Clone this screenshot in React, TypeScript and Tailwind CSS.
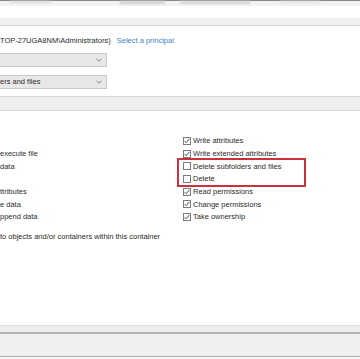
import React from "react";

const Check = ({ checked }: { checked: boolean }) => (
  <div className="w-[8px] h-[8px] border border-[#7c7c7c] bg-white flex items-center justify-center shrink-0">
    {checked && (
      <svg width="6" height="6" viewBox="0 0 6 6">
        <path d="M0.6 3.1 L2.2 4.7 L5.4 0.9" fill="none" stroke="#3a3a3a" strokeWidth="0.9" />
      </svg>
    )}
  </div>
);

const Row = ({ label, checked }: { label: string; checked: boolean }) => (
  <div className="h-[12.7px] flex items-center gap-[2px]">
    <Check checked={checked} />
    <span className="leading-none whitespace-nowrap">{label}</span>
  </div>
);

const LeftRow = ({ label }: { label: string }) => (
  <div className="h-[12.7px] flex items-center">
    <span className="leading-none whitespace-nowrap">{label}</span>
  </div>
);

const Chevron = () => (
  <svg width="6" height="4" viewBox="0 0 6 4">
    <path d="M0.5 0.7 L3 3.2 L5.5 0.7" fill="none" stroke="#666" strokeWidth="0.8" />
  </svg>
);

export default function App() {
  return (
    <div
      className="w-[360px] h-[359px] overflow-hidden bg-white flex flex-col text-[7.5px] text-[#2b2b2b]"
      style={{ fontFamily: '"Liberation Sans", Arial, sans-serif' }}
    >
      {/* top strip */}
      <div className="h-[1px] bg-[#8a8a8a] shrink-0" />
      <div className="h-[5px] bg-[#f3f3f3] shrink-0 flex items-start">
        <div className="w-[10px]" />
        <div className="w-[40px] h-[2px] bg-[#d8d8d8] blur-[1px]" />
        <div className="w-[70px]" />
        <div className="w-[45px] h-[3px] bg-[#cfcfcf] blur-[1px]" />
        <div className="w-[15px]" />
        <div className="w-[70px] h-[3px] bg-[#d4d4d4] blur-[1px]" />
        <div className="w-[30px]" />
        <div className="w-[40px] h-[2px] bg-[#e0e0e0] blur-[1px]" />
      </div>
      <div className="h-[12px] shrink-0" />
      <div className="h-[8px] bg-[#efefef] border-b border-[#d4d4d4] shrink-0" />

      {/* principal row */}
      <div className="mt-[10px] h-[10px] flex items-center shrink-0">
        <span className="whitespace-nowrap leading-none">TOP-27UGA8NM\Administrators)</span>
        <span className="ml-[6px] whitespace-nowrap leading-none text-[#3f82c4]">Select a principal</span>
      </div>

      {/* dropdowns */}
      <div className="mt-[7px] w-[107px] h-[14px] bg-[#e8e8e8] border border-l-0 border-[#cacaca] flex items-center justify-end pr-[4px] shrink-0">
        <Chevron />
      </div>
      <div className="mt-[8px] w-[107px] h-[14px] bg-[#e8e8e8] border border-l-0 border-[#cacaca] flex items-center justify-between pr-[4px] shrink-0">
        <span className="whitespace-nowrap leading-none">ers and files</span>
        <Chevron />
      </div>

      {/* gray band */}
      <div className="mt-[7px] h-[15px] bg-[#efefef] border-t border-b border-[#d8d8d8] shrink-0" />

      {/* permissions */}
      <div className="mt-[23.65px] flex shrink-0">
        <div className="w-[183px] flex flex-col">
          <LeftRow label="" />
          <LeftRow label="execute file" />
          <LeftRow label="data" />
          <LeftRow label="" />
          <LeftRow label="ttributes" />
          <LeftRow label="e data" />
          <LeftRow label="ppend data" />
        </div>
        <div className="flex flex-col">
          <Row label="Write attributes" checked />
          <Row label="Write extended attributes" checked />
          <div className="relative">
            <Row label="Delete subfolders and files" checked={false} />
            <Row label="Delete" checked={false} />
            <div className="absolute left-[-6px] top-[-2px] w-[129px] h-[29px] border-2 border-[#c8323c]" />
          </div>
          <Row label="Read permissions" checked />
          <Row label="Change permissions" checked />
          <Row label="Take ownership" checked />
        </div>
      </div>

      <div className="mt-[8.5px] h-[10px] flex items-center shrink-0">
        <span className="whitespace-nowrap leading-none">to objects and/or containers within this container</span>
      </div>

      {/* bottom */}
      <div className="mt-auto shrink-0 flex flex-col">
        <div className="h-[1px] bg-[#dedede]" />
        <div className="h-[6px] bg-[#efefef]" />
        <div className="h-[2px] bg-[#b4b4b4]" />
        <div className="h-[22px] bg-[#f0f0f0]" />
        <div className="h-[1px] bg-[#b0b0b0]" />
        <div className="h-[2px] bg-[#f7f7f7]" />
      </div>
    </div>
  );
}
